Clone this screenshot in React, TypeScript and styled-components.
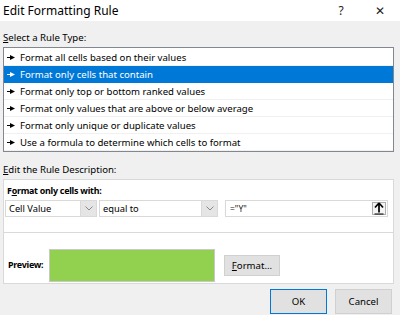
import { FC } from 'react'
import styled, { createGlobalStyle } from 'styled-components'

const GlobalStyle = createGlobalStyle`
  html, body {
    margin: 0;
    padding: 0;
    background: #f0f0f0;
  }
  body {
    font-family: 'Noto Sans', 'Open Sans', sans-serif;
    font-size: 9.3px;
    color: #000;
  }
  * {
    box-sizing: border-box;
  }
`

const Dialog = styled.div`
  width: 400px;
  height: 315px;
  overflow: hidden;
  background: #f0f0f0;
  display: flex;
  flex-direction: column;
`

const TitleBar = styled.div`
  height: 21px;
  background: #fff;
  display: flex;
  align-items: center;
  padding-left: 3px;
  font-size: 12px;
`

const TitleText = styled.div`
  flex: 1;
`

const TitleButton = styled.div<{ $w: number }>`
  width: ${(p) => p.$w}px;
  text-align: center;
  font-size: 12px;
  color: #222;
`

const Body = styled.div`
  padding: 0 6px 0 3px;
  display: flex;
  flex-direction: column;
`

const Label = styled.div<{ $top: number }>`
  margin-top: ${(p) => p.$top}px;
  height: 17px;
  line-height: 17px;
  font-size: 9.6px;
`

const Key = styled.span`
  text-decoration: underline;
`

const List = styled.div`
  margin-top: 1px;
  border: 1px solid #828790;
  background: #fff;
  height: 105px;
  padding-top: 1px;
`

const ListRow = styled.div<{ $selected?: boolean }>`
  height: 17px;
  border-bottom: 1px solid ${(p) => (p.$selected ? '#0078d7' : '#f0f0f0')};
  background: ${(p) => (p.$selected ? '#0078d7' : '#fff')};
  color: ${(p) => (p.$selected ? '#fff' : '#000')};
  display: flex;
  align-items: center;
  padding-left: 3px;
  font-size: 9.6px;
`

const Bullet = styled.span`
  width: 13px;
  display: inline-flex;
  align-items: center;
`

const Panel = styled.div`
  margin-top: 1px;
  border: 1px solid #d9d9d9;
  background: #fff;
  display: flex;
  flex-direction: column;
`

const Section = styled.div`
  padding: 3px 5px 0 1px;
  height: 53px;
  border-bottom: 1px solid #d9d9d9;
`

const Bold = styled.div`
  font-weight: bold;
  font-size: 8.9px;
  letter-spacing: -0.25px;
  height: 16px;
  line-height: 16px;
  padding-left: 2px;
`

const Controls = styled.div`
  display: flex;
  align-items: center;
  margin-top: 1px;
`

const Combo = styled.div<{ $w: number; $gap: number }>`
  width: ${(p) => p.$w}px;
  margin-right: ${(p) => p.$gap}px;
  height: 17px;
  border: 1px solid #d9d9d9;
  display: flex;
`

const ComboText = styled.div`
  flex: 1;
  padding-left: 3px;
  line-height: 15px;
`

const ComboButton = styled.div`
  width: 16px;
  background: #e5e5e5;
  border-left: 1px solid #d9d9d9;
  display: flex;
  align-items: center;
  justify-content: center;
`

const Input = styled.div`
  flex: 1;
  height: 17px;
  border: 1px solid #d9d9d9;
  display: flex;
  padding: 1px;
`

const InputText = styled.div`
  flex: 1;
  padding-left: 3px;
  line-height: 13px;
  font-size: 8.5px;
  color: #222;
`

const RefButton = styled.div`
  width: 14px;
  background: #f4f4f4;
  border: 1px solid #adadad;
  display: flex;
  align-items: center;
  justify-content: center;
`

const PreviewRow = styled.div`
  display: flex;
  align-items: center;
  height: 50px;
  padding: 14px 0 0 2px;
`

const PreviewLabel = styled(Bold)`
  width: 43px;
`

const Swatch = styled.div`
  width: 166px;
  height: 33px;
  background: #92d050;
  border: 1px solid #c8c8c8;
`

const Button = styled.div<{ $w: number; $default?: boolean }>`
  width: ${(p) => p.$w}px;
  height: 21px;
  border: 1px solid ${(p) => (p.$default ? '#0078d7' : '#d0d0d0')};
  background: #e1e1e1;
  display: flex;
  align-items: center;
  justify-content: center;
  font-size: 9.6px;
`

const FormatButton = styled(Button)`
  margin-left: 9px;
`

const Footer = styled.div`
  display: flex;
  justify-content: flex-end;
  gap: 8px;
  padding: 5px 8px 0 0;
`

const FooterButton = styled(Button)`
  height: 25px;
`

const rules = [
  'Format all cells based on their values',
  'Format only cells that contain',
  'Format only top or bottom ranked values',
  'Format only values that are above or below average',
  'Format only unique or duplicate values',
  'Use a formula to determine which cells to format',
]

const Pointer: FC<{ color: string }> = ({ color }) => (
  <svg width="8" height="5" viewBox="0 0 8 5">
    <path d="M0 2.5 H4" stroke={color} strokeWidth="1" />
    <path d="M3 0 L8 2.5 L3 5 Z" fill={color} />
  </svg>
)

const Chevron: FC = () => (
  <svg width="8" height="5" viewBox="0 0 8 5">
    <path d="M0.5 0.5 L4 4 L7.5 0.5" fill="none" stroke="#888" strokeWidth="1" />
  </svg>
)

const UpArrow: FC = () => (
  <svg width="10" height="13" viewBox="0 0 10 13">
    <path d="M5 1 L1 5.5 M5 1 L9 5.5 M5 1 L5 10.5" fill="none" stroke="#000" strokeWidth="1.7" />
    <path d="M0.5 12 L9.5 12" stroke="#000" strokeWidth="1" />
  </svg>
)

const App: FC = () => {
  return (
    <Dialog>
      <GlobalStyle />
      <TitleBar>
        <TitleText>Edit Formatting Rule</TitleText>
        <TitleButton $w={38}>?</TitleButton>
        <TitleButton $w={40}>✕</TitleButton>
      </TitleBar>
      <Body>
        <Label $top={8}>
          <Key>S</Key>elect a Rule Type:
        </Label>
        <List>
          {rules.map((r, i) => (
            <ListRow key={r} $selected={i === 1}>
              <Bullet>
                <Pointer color={i === 1 ? '#fff' : '#000'} />
              </Bullet>
              {r}
            </ListRow>
          ))}
        </List>
        <Label $top={9}>
          <Key>E</Key>dit the Rule Description:
        </Label>
        <Panel>
          <Section>
            <Bold>
              F<Key>o</Key>rmat only cells with:
            </Bold>
            <Controls>
              <Combo $w={92} $gap={2}>
                <ComboText>Cell Value</ComboText>
                <ComboButton>
                  <Chevron />
                </ComboButton>
              </Combo>
              <Combo $w={119} $gap={7}>
                <ComboText>equal to</ComboText>
                <ComboButton>
                  <Chevron />
                </ComboButton>
              </Combo>
              <Input>
                <InputText>="Y"</InputText>
                <RefButton>
                  <UpArrow />
                </RefButton>
              </Input>
            </Controls>
          </Section>
          <PreviewRow>
            <PreviewLabel>Preview:</PreviewLabel>
            <Swatch />
            <FormatButton $w={56}>
              <span>
                <Key>F</Key>ormat...
              </span>
            </FormatButton>
          </PreviewRow>
        </Panel>
      </Body>
      <Footer>
        <FooterButton $w={57} $default>
          OK
        </FooterButton>
        <FooterButton $w={57}>Cancel</FooterButton>
      </Footer>
    </Dialog>
  )
}

export default App
